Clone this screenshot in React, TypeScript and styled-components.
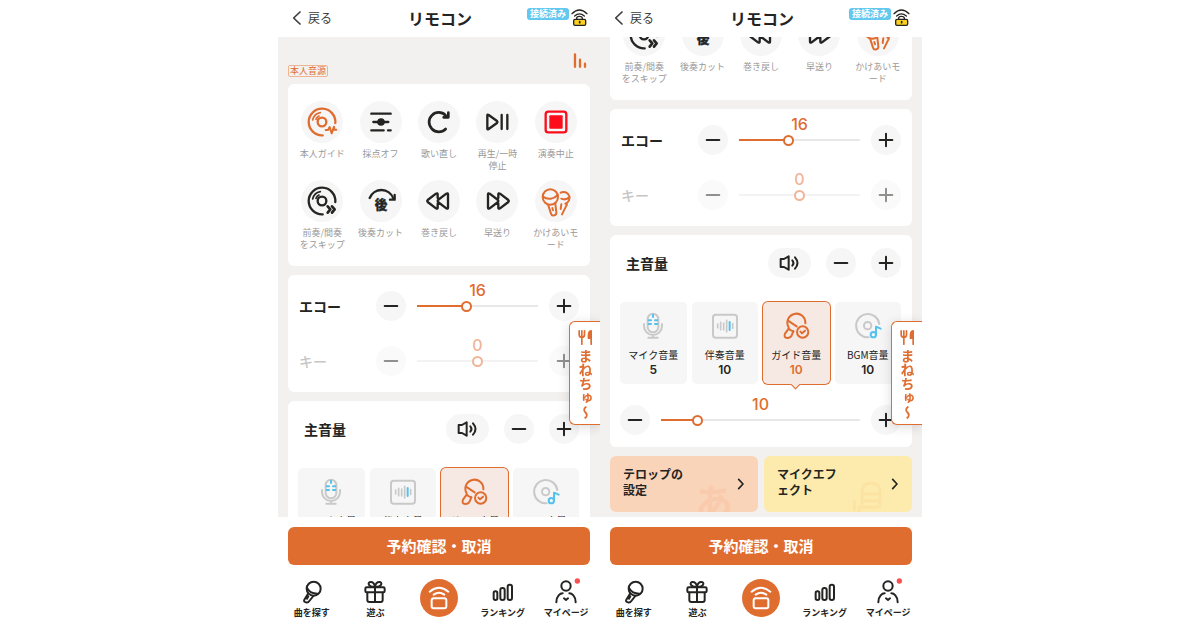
import React, { useId, useLayoutEffect, useRef, useState } from "react";
import styled, { createGlobalStyle, css } from "styled-components";

const orange = "#e06d30";
const ink = "#242422";
const jp = `"Noto Sans CJK JP", "Liberation Sans", sans-serif`;
const num = `Inter, "Noto Sans CJK JP", sans-serif`;

const Global = createGlobalStyle`
  *, *::before, *::after { box-sizing: border-box; }
  body { margin: 0; background: #fff; color: ${ink}; font-family: ${jp}; }
  button { border: 0; padding: 0; margin: 0; background: none; font: inherit; color: inherit; cursor: pointer; }
  a { color: inherit; text-decoration: none; }
`;

const Stage = styled.main`
  display: grid;
  grid-template-columns: 1fr 1fr;
  max-width: 644px;
  margin: 0 auto;
`;

const Phone = styled.section`
  position: relative;
  display: flex;
  flex-direction: column;
  height: 100vh;
  min-width: 0;
  overflow: hidden;
`;

const Header = styled.header`
  display: grid;
  grid-template-columns: 1fr auto 1fr;
  align-items: center;
  height: 37px;
  flex: none;
  padding: 0 12px 2px 14px;
`;

const Back = styled.a`
  display: flex;
  align-items: center;
  gap: 6px;
  color: #3c3c3a;
  font-size: 12px;
  line-height: 16px;
`;

const Title = styled.h1`
  margin: 0;
  font-size: 16px;
  line-height: 20px;
  font-weight: 700;
`;

const Status = styled.div`
  display: flex;
  justify-content: flex-end;
  align-items: center;
  gap: 2px;
`;

const Connected = styled.span`
  padding: 0 3px;
  margin-bottom: 8px;
  border-radius: 3px;
  background: #62c8ef;
  color: #fff;
  font-size: 9px;
  line-height: 12px;
  font-weight: 700;
  white-space: nowrap;
`;

const Scroller = styled.div`
  flex: 1;
  min-height: 0;
  padding: 0 10px 5px;
  overflow-y: auto;
  scrollbar-width: none;
  background: #f3f1ef;
`;

const SongInfo = styled.div`
  display: flex;
  justify-content: space-between;
  align-items: flex-end;
  height: 47px;
  padding-bottom: 7px;
`;

const SourceTag = styled.span`
  padding: 0 1px;
  border: 1px solid #eeb595;
  border-radius: 2px;
  color: ${orange};
  font-size: 9px;
  line-height: 10px;
`;

const Bars = styled.span`
  padding: 0 3px 9px 0;
  line-height: 0;
`;

const Stack = styled.div`
  display: flex;
  flex-direction: column;
  gap: 9px;
`;

const Card = styled.div`
  border-radius: 6px;
  background: #fff;
`;

const ActionGrid = styled(Card)`
  display: grid;
  grid-template-columns: repeat(5, 1fr);
  row-gap: 8px;
  padding: 17px 5px 15px;
`;

const Action = styled.button`
  display: flex;
  flex-direction: column;
  align-items: center;
  gap: 5px;
  height: 71px;
  color: #999;
  font-size: 9px;
  line-height: 12px;
  white-space: pre;
`;

const Disc = styled.span<{ $tone?: string }>`
  display: grid;
  place-items: center;
  flex: none;
  width: 42px;
  height: 42px;
  border-radius: 50%;
  background: #f6f6f6;
  color: ${(p) => p.$tone || ink};
`;

const ToneCard = styled(Card)`
  display: flex;
  flex-direction: column;
  gap: 5px;
  padding: 6px 11px;
`;

const SliderRow = styled.div<{ $dim?: boolean }>`
  display: flex;
  align-items: center;
  gap: 11px;
  height: 50px;
  opacity: ${(p) => (p.$dim ? 0.5 : 1)};
`;

const RowLabel = styled.label<{ $dim?: boolean }>`
  width: 66px;
  color: ${(p) => (p.$dim ? "#8c8c8c" : ink)};
  font-size: 14px;
  line-height: 20px;
  font-weight: ${(p) => (p.$dim ? 500 : 700)};
`;

const Round = styled.button<{ $wide?: boolean }>`
  display: grid;
  place-items: center;
  flex: none;
  width: ${(p) => (p.$wide ? 43 : 30)}px;
  height: 30px;
  border-radius: 15px;
  background: #f6f6f6;
`;

const Track = styled.div`
  display: flex;
  flex-direction: column;
  flex: 1;
  min-width: 0;
  height: 50px;
`;

const Value = styled.output`
  height: 20px;
  color: ${orange};
  font-family: ${num};
  font-size: 16px;
  line-height: 18px;
  font-weight: 500;
  text-align: center;
`;

const thumb = css`
  width: 11px;
  height: 11px;
  border: 2px solid ${orange};
  border-radius: 50%;
  background: #fff;
`;

const Range = styled.input`
  appearance: none;
  width: 100%;
  height: 10px;
  margin: 0;
  background: linear-gradient(${orange}, ${orange}) 0 50% / var(--fill) 2px no-repeat,
    linear-gradient(#e8e8e8, #e8e8e8) 0 50% / 100% 2px no-repeat;
  &::-webkit-slider-thumb { appearance: none; ${thumb} }
  &::-moz-range-thumb { ${thumb} }
`;

const VolumeCard = styled(Card)`
  padding: 13px 11px 2px 10px;
`;

const VolumeHead = styled.div`
  display: flex;
  align-items: center;
  gap: 15px;
  padding-left: 6px;
`;

const VolumeTitle = styled.h2`
  flex: 1;
  margin: 0;
  font-size: 14px;
  line-height: 20px;
  font-weight: 700;
`;

const Tiles = styled.div`
  display: grid;
  grid-template-columns: repeat(4, 1fr);
  gap: 5px;
  margin: 24px 0 11px;
`;

const Tile = styled.button<{ $on?: boolean }>`
  position: relative;
  display: flex;
  flex-direction: column;
  align-items: center;
  height: 82px;
  padding-top: 11px;
  border-radius: 5px;
  background: ${(p) => (p.$on ? "#f6e9e3" : "#f6f6f6")};
  box-shadow: ${(p) => (p.$on ? `0 0 0 1px ${orange}` : "none")};
  font-size: 10px;
  line-height: 16px;
  white-space: nowrap;
  ${(p) =>
    p.$on &&
    css`
      &::after {
        content: "";
        position: absolute;
        bottom: -4px;
        left: 50%;
        width: 7px;
        height: 7px;
        margin-left: -4px;
        border: solid ${orange};
        border-width: 0 1px 1px 0;
        background: #f6e9e3;
        transform: rotate(45deg);
      }
    `}
`;

const TileIcon = styled.span<{ $on?: boolean }>`
  height: 34px;
  color: ${(p) => (p.$on ? orange : "#c9c9c9")};
  line-height: 0;
`;

const TileValue = styled.span<{ $on?: boolean }>`
  color: ${(p) => (p.$on ? orange : ink)};
  font-family: ${num};
  font-size: 12px;
  line-height: 14px;
  font-weight: 600;
`;

const Links = styled.div`
  display: grid;
  grid-template-columns: 1fr 1fr;
  gap: 6px;
`;

const SettingLink = styled.a<{ $bg: string }>`
  position: relative;
  display: flex;
  justify-content: space-between;
  align-items: center;
  height: 56px;
  padding: 0 13px 5px 13px;
  border-radius: 6px;
  overflow: hidden;
  background: ${(p) => p.$bg};
  font-size: 12px;
  line-height: 16px;
  font-weight: 700;
  white-space: pre;
`;

const ChevronBox = styled.span`
  padding-top: 4px;
  line-height: 0;
`;

const Watermark = styled.span<{ $tone: string }>`
  position: absolute;
  right: 25px;
  bottom: -8px;
  color: ${(p) => p.$tone};
  font-size: 38px;
  line-height: 40px;
  font-weight: 700;
`;

const Footer = styled.footer`
  flex: none;
  height: 113px;
  padding-top: 10px;
  background: #fff;
`;

const Reserve = styled.button`
  display: block;
  width: calc(100% - 20px);
  height: 38px;
  margin: 0 10px;
  border-radius: 6px;
  background: ${orange};
  color: #fff;
  font-size: 15px;
  line-height: 20px;
  font-weight: 700;
`;

const Nav = styled.nav`
  display: grid;
  grid-template-columns: repeat(5, 1fr);
  align-items: center;
  padding: 12px 2px 0;
`;

const NavItem = styled.a`
  display: flex;
  flex-direction: column;
  align-items: center;
  font-size: 9px;
  line-height: 12px;
  font-weight: 700;
  white-space: nowrap;
`;

const NavDisc = styled.span`
  display: grid;
  place-items: center;
  width: 38px;
  height: 38px;
  border-radius: 50%;
  background: ${orange};
  color: #fff;
`;

const SideTab = styled.button`
  position: absolute;
  top: 321px;
  right: 0;
  display: flex;
  flex-direction: column;
  align-items: center;
  gap: 4px;
  width: 31px;
  height: 104px;
  padding: 8px 0 0 1px;
  border: 1px solid ${orange};
  border-right: 0;
  border-radius: 6px 0 0 6px;
  background: #fff;
  box-shadow: 0 2px 12px rgba(0, 0, 0, 0.14);
  color: ${orange};
`;

const TabText = styled.span`
  writing-mode: vertical-rl;
  font-size: 14px;
  line-height: 16px;
  font-weight: 700;
`;

const Glyph = styled.svg`
  display: block;
  fill: none;
  stroke: currentColor;
  stroke-width: 7;
  stroke-linecap: round;
  stroke-linejoin: round;
  overflow: visible;
`;

function Icon({ size = 30, children }: { size?: number; children: React.ReactNode }) {
  const h = (size * 3) / 2;
  return (
    <Glyph width={size} height={size} viewBox={`${-h} ${-h} ${h * 2} ${h * 2}`} aria-hidden="true">
      {children}
    </Glyph>
  );
}

const disc = (
  <>
    <path d="M40 3A40 40 0 1 0 2 40" />
    <circle r="13" />
    <path d="M-28-6A29 29 0 0 1-5-28M-18-8A20 20 0 0 1-9-18" strokeWidth="5" />
  </>
);

const icons = {
  guide: <>{disc}<path d="M11 24h7l5-9 6 19 7-20 1 9h6" strokeWidth="6" /></>,
  score: (
    <>
      <path d="M-29-25H29M-23 0H22M-29 25H8M21 25H29" />
      <circle r="8" fill="currentColor" />
    </>
  ),
  retry: <path d="M20-20A29 29 0 1 0 20 21M28-28V-14H14" strokeWidth="8" />,
  play: <path d="M-29-20V20Q-29 24-25 21L0 3Q3 0 0-3L-25-21Q-29-24-29-20ZM14-21V21M31-21V21" />,
  stop: (
    <>
      <rect x="-31" y="-31" width="62" height="62" rx="8" />
      <rect x="-20" y="-20" width="40" height="40" rx="3" fill="currentColor" stroke="none" />
    </>
  ),
  skip: <>{disc}<path d="M17 16l8 9-8 10M30 16l8 9-8 10" strokeWidth="8" /></>,
  cut: (
    <>
      <path d="M-34-9A38 38 0 0 1 37-8" />
      <path d="M41-18V-4H27" />
      <text x="0" y="25" textAnchor="middle" fontSize="38" fontWeight="900" fill="currentColor" stroke="currentColor" strokeWidth="1">後</text>
    </>
  ),
  rewind: <path d="M-4-9V-20Q-4-25-9-22L-34-3Q-37 0-34 3L-9 22Q-4 25-4 20V8M-3-3Q-5 0-3 3L22 22Q27 25 27 20V-20Q27-25 22-22Z" />,
  forward: <path d="M4-9V-20Q4-25 9-22L34-3Q37 0 34 3L9 22Q4 25 4 20V8M3-3Q5 0 3 3L-22 22Q-27 25-27 20V-20Q-27-25-22-22Z" />,
  duet: (
    <g strokeWidth="6">
      <circle cx="-17" cy="-12" r="23" />
      <path d="M-39-13C-24-2-6-6 5-18M-23 13L-15 38Q-13 45-5 43 2 41 1 34L-2 8M-11 21l2 7" />
      <path d="M14-25A18 18 0 1 1 28 8M16-7Q29-1 41-12M33 10L18 40M16 10L14 24" />
    </g>
  ),
  speaker: (
    <g strokeWidth="6">
      <path d="M-28-12V12H-18L-4 20V-20L-18-12Z" />
      <path d="M7-8Q14 0 7 8M15-17Q30 0 15 17" />
    </g>
  ),
  mic: (
    <g strokeWidth="6">
      <rect x="-16" y="-37" width="32" height="56" rx="16" />
      <path d="M-27-6V0A27 27 0 0 0 27 0V-6M0 28V34M-14 35H14" />
      <path d="M0-34V-27M-13-17H-6M6-17H13M-13-6H-6M6-6H13" stroke="#55c2ee" />
    </g>
  ),
  backing: (
    <g strokeWidth="6">
      <rect x="-36" y="-34" width="72" height="69" rx="8" />
      <path d="M-22-6V6M-13-11V11M-4-9V12M5-17V18M23-7V7" strokeWidth="5" />
      <path d="M14-12V12" stroke="#55c2ee" />
    </g>
  ),
  vocal: (
    <g strokeWidth="6">
      <path d="M-22 4A27 27 0 1 1 28-8M-24-16L2 1" />
      <path d="M-22 8L-33 23Q-38 35-26 36-17 36-13 28L-8 16" />
      <path d="M-22 8Q-16 15-8 16" />
      <circle cx="20" cy="18" r="17" />
      <path d="M13 17l5 5 9-8" />
    </g>
  ),
  bgm: (
    <g strokeWidth="6">
      <path d="M34-6A35 35 0 1 0 2 34" />
      <circle cx="-1" cy="-1" r="11" />
      <g stroke="#55c2ee"><circle cx="16" cy="26" r="8" /><path d="M24 26V2L38 8" /></g>
    </g>
  ),
  find: (
    <g strokeWidth="6">
      <circle cx="5" cy="-10" r="21" />
      <path d="M-15-12Q-5 6 18 5M-12 5L-23 23Q-26 30-18 31-12 33-8 27L4 12M-11 13l-4 7" />
    </g>
  ),
  gift: (
    <g strokeWidth="6">
      <rect x="-29" y="-14" width="58" height="15" rx="4" />
      <path d="M-23 2V24Q-23 30-17 30H17Q23 30 23 24V2M0-14V30M0-15C-22-14-23-30-13-30-5-30-1-22 0-15 1-22 5-30 13-30 23-30 22-14 0-15" />
    </g>
  ),
  remote: (
    <g strokeWidth="6">
      <rect x="-22" y="1" width="44" height="30" rx="6" />
      <path d="M-28-19Q0-42 28-19M-16-10Q0-21 16-10" />
    </g>
  ),
  rank: (
    <g strokeWidth="6">
      <rect x="-28" y="-2" width="11" height="26" rx="5" />
      <rect x="-8" y="-12" width="13" height="36" rx="6" />
      <rect x="14" y="-22" width="13" height="46" rx="6" />
    </g>
  ),
  user: (
    <g strokeWidth="6">
      <circle cx="0" cy="-18" r="14" />
      <path d="M-29 31C-29 11-17 4-10 4M29 31C29 11 17 4 10 4M-6 19L0 24 6 19" />
      <circle cx="34" cy="-33" r="8" fill="#fa5151" stroke="none" />
    </g>
  ),
  minus: <path d="M-19 0H19" strokeWidth="6" />,
  plus: <path d="M-19 0H19M0-19V19" strokeWidth="6" />,
  cutlery: (
    <g strokeWidth="5">
      <path d="M-19-20V-9Q-19 0-11 0-3 0-3-9V-20M-11-20V20" />
      <path d="M17 20V-20Q9-18 9-8V2H17Z" fill="currentColor" />
    </g>
  ),
};

type IconName = keyof typeof icons;

const actions: { icon: IconName; label: string; tone?: string }[] = [
  { icon: "guide", label: "本人ガイド", tone: orange },
  { icon: "score", label: "採点オフ" },
  { icon: "retry", label: "歌い直し" },
  { icon: "play", label: "再生/一時\n停止" },
  { icon: "stop", label: "演奏中止", tone: "#fb0d1b" },
  { icon: "skip", label: "前奏/間奏\nをスキップ" },
  { icon: "cut", label: "後奏カット" },
  { icon: "rewind", label: "巻き戻し" },
  { icon: "forward", label: "早送り" },
  { icon: "duet", label: "かけあいモ\nード", tone: orange },
];

const volumes: { icon: IconName; label: string; value: number; on?: boolean }[] = [
  { icon: "mic", label: "マイク音量", value: 5 },
  { icon: "backing", label: "伴奏音量", value: 10 },
  { icon: "vocal", label: "ガイド音量", value: 10, on: true },
  { icon: "bgm", label: "BGM音量", value: 10 },
];

const tabs: { icon: IconName; label: string }[] = [
  { icon: "find", label: "曲を探す" },
  { icon: "gift", label: "遊ぶ" },
  { icon: "remote", label: "" },
  { icon: "rank", label: "ランキング" },
  { icon: "user", label: "マイページ" },
];

interface SliderProps {
  label?: string;
  name?: string;
  initial: number;
  min?: number;
  max: number;
  dim?: boolean;
}

function Slider({ label, name, initial, min = 0, max, dim }: SliderProps) {
  const id = useId();
  const [value, setValue] = useState(initial);
  const step = (d: number) => setValue((v) => Math.min(max, Math.max(min, v + d)));
  const fill = min < 0 ? "0%" : `${((value - min) / (max - min)) * 100}%`;
  return (
    <SliderRow $dim={dim}>
      {label && <RowLabel htmlFor={id} $dim={dim}>{label}</RowLabel>}
      <Round aria-label="下げる" onClick={() => step(-1)}><Icon size={20}>{icons.minus}</Icon></Round>
      <Track>
        <Value htmlFor={id}>{value}</Value>
        <Range
          id={id}
          type="range"
          aria-label={label ? undefined : name}
          min={min}
          max={max}
          value={value}
          onChange={(e) => setValue(Number(e.target.value))}
          style={{ "--fill": fill } as React.CSSProperties}
        />
      </Track>
      <Round aria-label="上げる" onClick={() => step(1)}><Icon size={20}>{icons.plus}</Icon></Round>
    </SliderRow>
  );
}

function Chevron() {
  return (
    <ChevronBox>
      <Glyph width="8" height="12" viewBox="0 0 24 36" aria-hidden="true"><path d="M5 4L18 18 5 32" strokeWidth="5" /></Glyph>
    </ChevronBox>
  );
}

function Remote({ scrolled = 0 }: { scrolled?: number }) {
  const ref = useRef<HTMLDivElement>(null);
  useLayoutEffect(() => {
    if (ref.current) ref.current.scrollTop = scrolled;
  }, [scrolled]);

  return (
    <Phone>
      <Header>
        <Back href="#back">
          <Glyph width="10" height="14" viewBox="0 0 30 42" aria-hidden="true"><path d="M24 3L5 21 24 39" strokeWidth="5" /></Glyph>
          戻る
        </Back>
        <Title>リモコン</Title>
        <Status>
          <Connected>接続済み</Connected>
          <Glyph width="17" height="17" viewBox="0 0 51 51" aria-hidden="true">
            <path d="M3 14Q25-8 48 14M11 21Q25 8 40 21" strokeWidth="4" />
            <path d="M17 31V28Q17 22 25 22 34 22 34 28V31" strokeWidth="4" />
            <rect x="8" y="31" width="36" height="18" rx="4" fill="#fbd01f" strokeWidth="4" />
            <path d="M26 38V41" strokeWidth="5" />
          </Glyph>
        </Status>
      </Header>

      <Scroller ref={ref}>
        <SongInfo>
          <SourceTag>本人音源</SourceTag>
          <Bars>
            <Glyph width="14" height="15" viewBox="0 0 42 45" color={orange} aria-hidden="true">
              <path d="M6 4V41M21 20V41M36 32V41" />
            </Glyph>
          </Bars>
        </SongInfo>
        <Stack>
          <ActionGrid>
            {actions.map((a) => (
              <Action key={a.label}>
                <Disc $tone={a.tone}><Icon>{icons[a.icon]}</Icon></Disc>
                {a.label}
              </Action>
            ))}
          </ActionGrid>

          <ToneCard>
            <Slider label="エコー" initial={16} max={40} />
            <Slider label="キー" initial={0} min={-10} max={10} dim />
          </ToneCard>

          <VolumeCard>
            <VolumeHead>
              <VolumeTitle>主音量</VolumeTitle>
              <Round $wide aria-label="消音"><Icon size={20}>{icons.speaker}</Icon></Round>
              <Round aria-label="主音量を下げる"><Icon size={20}>{icons.minus}</Icon></Round>
              <Round aria-label="主音量を上げる"><Icon size={20}>{icons.plus}</Icon></Round>
            </VolumeHead>
            <Tiles>
              {volumes.map((v) => (
                <Tile key={v.label} $on={v.on} aria-pressed={!!v.on}>
                  <TileIcon $on={v.on}><Icon size={26}>{icons[v.icon]}</Icon></TileIcon>
                  <span>{v.label}</span>
                  <TileValue $on={v.on}>{v.value}</TileValue>
                </Tile>
              ))}
            </Tiles>
            <Slider name="ガイド音量" initial={10} max={60} />
          </VolumeCard>

          <Links>
            <SettingLink href="#telop" $bg="#fad4b9">
              <Watermark $tone="#f9caac" aria-hidden="true">あ</Watermark>
              <span>{"テロップの\n設定"}</span>
              <Chevron />
            </SettingLink>
            <SettingLink href="#mic-effect" $bg="#fcebad">
              <Watermark $tone="#fce3a4" aria-hidden="true">
                <Glyph width="36" height="40" viewBox="0 0 108 120">
                  <path d="M33 72V36Q33 10 60 10 87 10 87 36V72M33 42H87M33 62H87M10 64V90M24 80V96M33 82H87" strokeWidth="9" />
                </Glyph>
              </Watermark>
              <span>{"マイクエフ\nェクト"}</span>
              <Chevron />
            </SettingLink>
          </Links>
        </Stack>
      </Scroller>

      <Footer>
        <Reserve>予約確認・取消</Reserve>
        <Nav>
          {tabs.map((t) =>
            t.label ? (
              <NavItem key={t.icon} href={`#${t.icon}`}>
                <Icon>{icons[t.icon]}</Icon>
                {t.label}
              </NavItem>
            ) : (
              <NavItem key={t.icon} href="#remote" aria-label="リモコン">
                <NavDisc><Icon>{icons[t.icon]}</Icon></NavDisc>
              </NavItem>
            )
          )}
        </Nav>
      </Footer>

      <SideTab>
        <Icon size={15}>{icons.cutlery}</Icon>
        <TabText>まねちゅ〜</TabText>
      </SideTab>
    </Phone>
  );
}

export default function App() {
  return (
    <>
      <Global />
      <Stage lang="ja">
        <Remote />
        <Remote scrolled={166} />
      </Stage>
    </>
  );
}
